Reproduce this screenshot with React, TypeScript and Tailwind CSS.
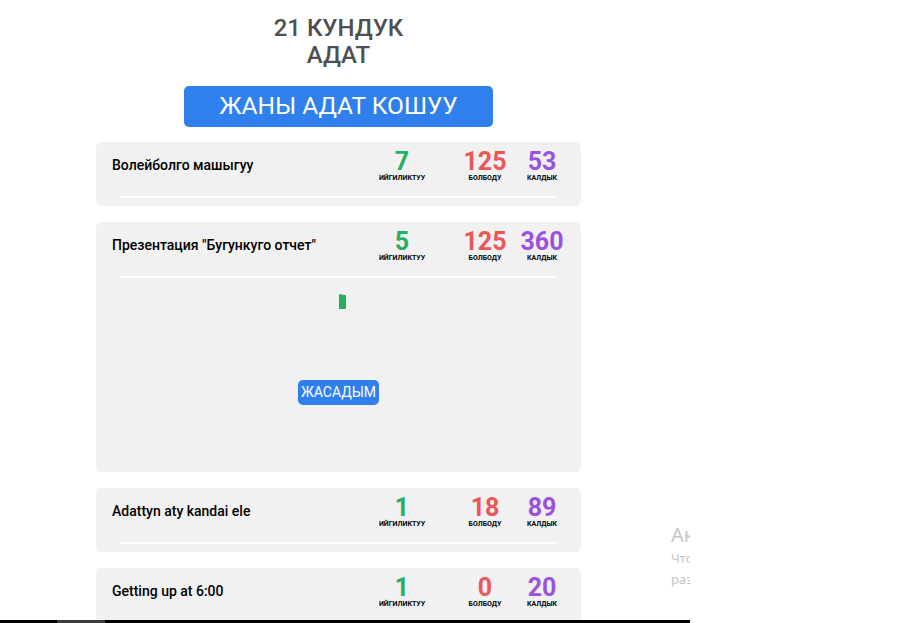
type Habit = {
  title: string;
  ok: number;
  fail: number;
  left: number;
  open?: boolean;
};

const habits: Habit[] = [
  { title: 'Волейболго машыгуу', ok: 7, fail: 125, left: 53 },
  { title: 'Презентация "Бугункуго отчет"', ok: 5, fail: 125, left: 360, open: true },
  { title: 'Adattyn aty kandai ele', ok: 1, fail: 18, left: 89 },
  { title: 'Getting up at 6:00', ok: 1, fail: 0, left: 20 },
];

function Stat({ value, label, className }: { value: number; label: string; className: string }) {
  return (
    <div className={`flex flex-col items-center ${className}`}>
      <span className="text-[25px] leading-none font-bold">{value}</span>
      <span className="mt-px text-[7px] leading-none font-bold text-black">{label}</span>
    </div>
  );
}

function HabitCard({ habit }: { habit: Habit }) {
  return (
    <div className="rounded-md bg-[#f1f1f1] pb-2">
      <div className="flex items-start pt-[7px] pl-4 pr-[17px]">
        <div className="flex-1 mt-[8.5px] text-[14px] leading-none font-medium text-black">
          {habit.title}
        </div>
        <Stat value={habit.ok} label="ИЙГИЛИКТУУ" className="w-[66px] text-[#27ae60]" />
        <Stat value={habit.fail} label="БОЛБОДУ" className="ml-[25px] w-[50px] text-[#eb5757]" />
        <Stat value={habit.left} label="КАЛДЫК" className="ml-[10px] w-[44px] text-[#9b51e0]" />
      </div>
      <div className="mx-6 mt-[14px] h-[2px] bg-white" />

      {habit.open && (
        <div className="pt-4 pb-[59px]">
          {/* progress chart */}
          <div className="ml-[243px] h-[15px] w-[7px] bg-[#27ae60] [clip-path:polygon(0_0,100%_8%,100%_100%,0_100%)]" />
          <button className="mx-auto mt-[71px] flex h-[25px] w-[81px] items-center justify-center rounded-[5px] bg-[#2f80ed] text-[14px] text-white">
            ЖАСАДЫМ
          </button>
        </div>
      )}
    </div>
  );
}

export default function App() {
  return (
    <div className="relative h-[623px] w-[903px] overflow-hidden bg-white font-['Roboto',sans-serif]">
      <div className="relative h-full w-[690px] overflow-hidden">
        <div className="ml-[96px] w-[485px]">
          <h1 className="mx-auto w-[160px] pt-[15px] text-center text-[24px] leading-[27px] font-medium text-[#4f4f4f]">
            21 КУНДУК АДАТ
          </h1>
          <button className="mx-auto mt-[17px] flex h-[41px] w-[309px] items-center justify-center rounded-[5px] bg-[#2f80ed] text-[24.5px] text-white">
            ЖАНЫ АДАТ КОШУУ
          </button>

          <div className="mt-[15px] flex flex-col gap-4">
            {habits.map((h) => (
              <HabitCard key={h.title} habit={h} />
            ))}
          </div>
        </div>

        {/* windows watermark */}
        <div className="absolute left-[671px] top-[522px] whitespace-nowrap font-['Noto_Sans',sans-serif] text-[#c6c6c6]">
          <div className="text-[20px] leading-[26px]">Активация Windows</div>
          <div className="text-[13px] leading-[21px]">Чтобы активировать Windows, перейдите в</div>
          <div className="text-[13px] leading-[21px]">раздел "Параметры".</div>
        </div>

        <div className="absolute bottom-0 left-0 h-[3px] w-full bg-black">
          <div className="absolute left-[57px] top-0 h-full w-[48px] bg-[#3b3b3b]" />
        </div>
      </div>
    </div>
  );
}
